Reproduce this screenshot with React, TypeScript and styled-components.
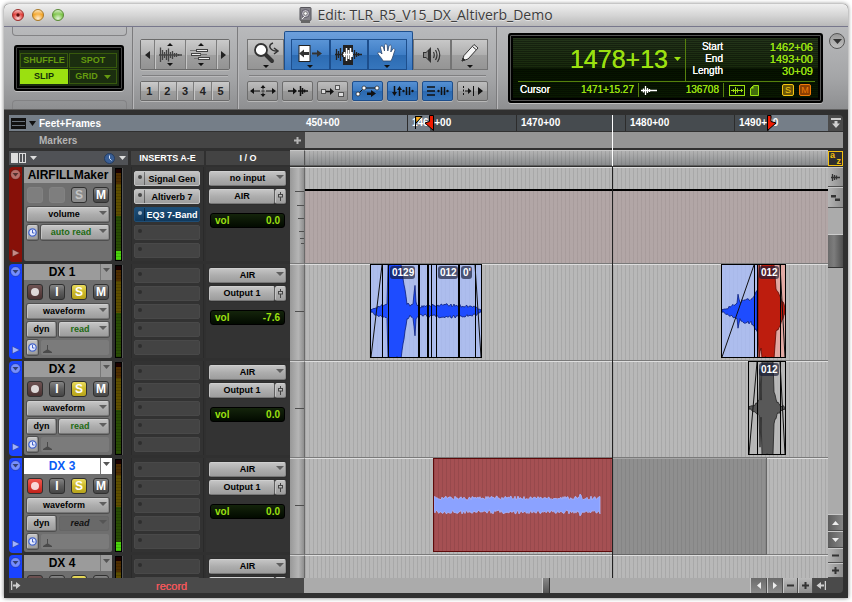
import React from "react";
import styled, { createGlobalStyle, css } from "styled-components";

const GlobalStyle = createGlobalStyle`
  * { box-sizing: border-box; }
  html, body { margin: 0; background: #fff; }
  body, button, select { font-family: "Liberation Sans", Arial, sans-serif; }
  button, select { border: 0; padding: 0; margin: 0; color: inherit; background: none; }
  svg { display: block; }
`;

/* ---------- shared pieces ---------- */

const stripes = css`
  background-image: repeating-linear-gradient(90deg, rgba(0, 0, 0, 0.085) 0 1px, transparent 1px 4px);
`;
const metal = css`
  background: linear-gradient(#c4c4c4, #adadad 50%, #9d9d9d);
`;
const lcdTexture = css`
  background:
    repeating-linear-gradient(rgba(0, 0, 0, 0.35) 0 1px, transparent 1px 2px),
    linear-gradient(#25361c, #182a0c 50%, #061300 51%, #0a1a02);
`;

const Window = styled.main`
  margin: 4px;
  height: calc(100vh - 8px);
  display: flex;
  flex-direction: column;
  overflow: hidden;
  border-radius: 5px 5px 0 0;
  background: #303030;
  box-shadow: 0 0 4px rgba(0, 0, 0, 0.55);
`;

/* ---------- title bar ---------- */

const TitleBar = styled.header`
  height: 22px;
  flex: none;
  display: grid;
  grid-template-columns: 1fr auto 1fr;
  align-items: center;
  background: linear-gradient(#efefef, #d6d6d6 50%, #b9b9b9);
`;
const Lights = styled.div`
  display: flex;
  gap: 8px;
  padding-left: 8px;
`;
const Light = styled.button<{ $tone: string; $edge: string }>`
  width: 12px;
  height: 12px;
  border-radius: 50%;
  border: 1px solid ${(p) => p.$edge};
  display: grid;
  place-items: center;
  color: #5d0f0d;
  background: radial-gradient(circle at 50% 85%, rgba(255, 255, 255, 0.8), transparent 55%),
    linear-gradient(rgba(255, 255, 255, 0.7), transparent 45%), ${(p) => p.$tone};
`;
const Title = styled.h1`
  margin: 0;
  display: flex;
  align-items: center;
  gap: 5px;
  font: 400 14px/22px "Open Sans", "Noto Sans", sans-serif;
  color: #3c3c3c;
  text-shadow: 0 1px 0 rgba(255, 255, 255, 0.5);
`;

/* ---------- toolbar ---------- */

const Toolbar = styled.section`
  height: 84px;
  flex: none;
  display: flex;
  border-top: 1px solid #77778c;
  border-bottom: 1px solid #606060;
  background: linear-gradient(#b9babc, #a5a6a8 60%, #8e8f91);
`;
const Section = styled.div<{ $w: number }>`
  flex: none;
  width: ${(p) => p.$w}px;
  border-right: 1px solid #7b7b7d;
  box-shadow: 1px 0 0 #b8b8ba;
  padding: 12px 7px 0;
`;
const ModeSection = styled(Section)`
  padding: 0 5px 0 8px;
  display: flex;
  flex-direction: column;
  justify-content: space-between;
`;
const Bracket = styled.div<{ $top?: boolean }>`
  height: 9px;
  border: 1px solid #838385;
  ${(p) =>
    p.$top
      ? css`border-top: 0; border-radius: 0 0 4px 4px;`
      : css`border-bottom: 0; border-radius: 4px 4px 0 0;`}
`;
const ModeLcd = styled.div`
  height: 46px;
  margin: 0 3px 0 2px;
  padding: 6px 5px 5px 4px;
  border-radius: 3px;
  border: 2px solid #000;
  box-shadow: inset 0 0 0 1px #444, inset 0 0 0 3px #000, 0 1px 0 #c4c4c4;
  background: #1a2b10;
  display: grid;
  grid-template-columns: 1fr 1fr;
  gap: 1px;
`;
const ModeButton = styled.button<{ $on?: boolean }>`
  display: flex;
  align-items: center;
  justify-content: center;
  gap: 6px;
  font-size: 9px;
  line-height: 13px;
  font-weight: 700;
  border: 1px solid ${(p) => (p.$on ? "#9be010" : "#37580d")};
  color: ${(p) => (p.$on ? "#14300a" : "#659a10")};
  background: ${(p) => (p.$on ? "#9be010" : "#1b2e0f")};
`;
const ButtonStrip = styled.div`
  display: flex;
  height: 31px;
  border: 1px solid #6b6b6b;
  border-radius: 2px;
  box-shadow: 0 1px 0 #b8b8b8;
`;
const NumberStrip = styled(ButtonStrip)`
  height: 20px;
`;
const StripButton = styled.button<{ $w?: number }>`
  ${(p) => (p.$w ? `width: ${p.$w}px;` : "flex: 1;")}
  display: flex;
  align-items: center;
  justify-content: center;
  font-size: 11px;
  font-weight: 700;
  color: #222;
  background: linear-gradient(#cbcbcb, #b0b0b0 50%, #9f9f9f 51%, #939393);
  & + & { border-left: 1px solid #7d7d7d; box-shadow: inset 1px 0 0 #c6c6c6; }
`;
const Rule = styled.div`
  height: 2px;
  margin: 5px 2px 4px;
  border-top: 1px solid #7f7f81;
  border-bottom: 1px solid #b9b9bb;
`;
const ToolSection = styled(Section)`
  padding: 4px 8px 0 9px;
`;
const ToolRow = styled.div`
  display: flex;
  align-items: flex-end;
`;
const Tool = styled.button<{ $on?: boolean; $w: number }>`
  width: ${(p) => p.$w}px;
  height: 31px;
  display: flex;
  align-items: center;
  justify-content: center;
  color: #222;
  border: 1px solid ${(p) => (p.$on ? "#1d4e8c" : "#747474")};
  ${(p) =>
    p.$on
      ? css`background: linear-gradient(#5a94d6, #3f7ec6 50%, #2c6bb2 51%, #3676bd);`
      : css`background: linear-gradient(#c8c8c8, #b0b0b0 50%, #a0a0a0 51%, #959595);`}
`;
const SmartTool = styled.div`
  width: 129px;
  height: 39px;
  display: flex;
  align-items: flex-end;
  justify-content: center;
  border: 1px solid #1d4e8c;
  border-bottom: 0;
  border-radius: 2px 2px 0 0;
  background: linear-gradient(#6c9fdc, #3a78c0);
`;
const OptionRow = styled.div`
  display: flex;
  gap: 4px;
`;
const Option = styled.button<{ $on?: boolean }>`
  width: 31px;
  height: 20px;
  display: flex;
  align-items: center;
  justify-content: center;
  color: #111;
  border-radius: 2px;
  border: 1px solid ${(p) => (p.$on ? "#1d4e8c" : "#6d6d6d")};
  box-shadow: 0 1px 0 #b8b8b8;
  ${(p) =>
    p.$on
      ? css`background: linear-gradient(#5590d3, #3b7bc3 50%, #2b69b0 51%, #3474bb);`
      : css`background: linear-gradient(#bdbdbd, #a8a8a8 50%, #999 51%, #8f8f8f);`}
`;

/* ---------- counter ---------- */

const CounterSection = styled.div`
  flex: 1;
  min-width: 0;
  display: flex;
  align-items: flex-start;
  gap: 6px;
  padding: 6px 3px 0 11px;
`;
const Counter = styled.div`
  flex: 1;
  height: 70px;
  padding: 4px 6px 3px 8px;
  border-radius: 3px;
  border: 2px solid #000;
  box-shadow: inset 0 0 0 1px #555, inset 0 0 0 3px #000, 0 1px 0 #c0c0c0;
  ${lcdTexture}
  display: flex;
  flex-direction: column;
  font-size: 10px;
  line-height: 12px;
  color: #9be010;
`;
const CounterTop = styled.div`
  display: flex;
  height: 43px;
  border-bottom: 1px solid #55800d;
`;
const MainTime = styled.output`
  flex: 1;
  display: flex;
  align-items: center;
  justify-content: flex-end;
  gap: 6px;
  padding: 0 4px 2px 0;
  font-size: 25px;
  text-shadow: 0 0 currentColor;
`;
const SelectionTimes = styled.dl`
  width: 130px;
  margin: 0;
  padding: 2px 2px 0 6px;
  border-left: 1px solid #55800d;
  display: grid;
  grid-template-columns: 31px 1fr;
  grid-auto-rows: 12px;
  text-align: right;
`;
const Term = styled.dt`
  color: #fff;
  text-shadow: 0 0 currentColor;
`;
const Value = styled.dd`
  margin: 0;
  font-size: 11px;
  text-shadow: 0 0 currentColor;
`;
const CounterBottom = styled.div`
  flex: 1;
  display: grid;
  grid-template-columns: 1fr 85px 92px;
  align-items: center;
  text-shadow: 0 0 currentColor;
`;
const CounterCell = styled.div`
  display: flex;
  align-items: center;
  justify-content: space-between;
  height: 14px;
  padding: 0 4px 0 2px;
  & + & { border-left: 1px solid #55800d; }
`;
const CellGroup = styled.div`
  display: flex;
  gap: 5px;
  padding-left: 3px;
`;
const Lamp = styled.button<{ $fg: string; $bg: string }>`
  width: 12px;
  height: 12px;
  border: 1px solid ${(p) => p.$fg};
  border-radius: 2px;
  background: ${(p) => p.$bg};
  color: ${(p) => p.$fg};
  font-size: 9px;
  line-height: 10px;
`;
const White = styled.span`
  color: #fff;
`;
const RoundButton = styled.button`
  width: 16px;
  height: 16px;
  border-radius: 50%;
  border: 1px solid #555;
  background: linear-gradient(#999, #c0c0c0);
  color: #333;
  display: grid;
  place-items: center;
`;

/* ---------- edit area ---------- */

const Body = styled.section`
  flex: 1;
  min-height: 0;
  display: flex;
  flex-direction: column;
  padding: 5px;
  position: relative;
`;
const RulerRow = styled.div`
  flex: none;
  display: flex;
  height: 16px;
  margin-bottom: 1px;
`;
const RulerHead = styled.div<{ $bg: string; $fg: string }>`
  flex: none;
  width: 296px;
  display: flex;
  align-items: center;
  gap: 3px;
  padding: 0 4px 0 2px;
  background: ${(p) => p.$bg};
  color: ${(p) => p.$fg};
  font-size: 10px;
  font-weight: 700;
`;
const RulerLabel = styled.span<{ $indent: number }>`
  flex: 1;
  padding-left: ${(p) => p.$indent}px;
`;
const Ruler = styled.div`
  flex: 1;
  position: relative;
  overflow: hidden;
  background: #757e88;
  color: #fff;
  font-size: 10px;
  font-weight: 700;
  line-height: 15px;
`;
const RulerSelection = styled.div<{ $x: number; $w: number }>`
  position: absolute;
  inset: 0 auto 0 ${(p) => p.$x}px;
  width: ${(p) => p.$w}px;
  background: #464b4f;
`;
const Mark = styled.span<{ $x: number; $first?: boolean }>`
  position: absolute;
  top: 0;
  bottom: 0;
  left: ${(p) => p.$x}px;
  padding-left: ${(p) => (p.$first ? 1 : 4)}px;
  border-left: ${(p) => (p.$first ? "0" : "1px solid #2c2c2c")};
`;
const Pin = styled.div<{ $x: number }>`
  position: absolute;
  top: 0;
  left: ${(p) => p.$x}px;
`;
const MarkerLane = styled.div`
  flex: 1;
  background: #959595;
`;
const CornerButton = styled.button`
  flex: none;
  width: 15px;
  background: #4b4b4b;
  color: #cfcfcf;
  border-radius: 0 4px 0 0;
  display: grid;
  place-items: center;
`;
const Main = styled.div`
  flex: 1;
  min-height: 0;
  display: flex;
  margin-top: 1px;
`;
const TrackArea = styled.div`
  flex: 1;
  min-width: 0;
  overflow: hidden;
  position: relative;
`;
const Grid = styled.div`
  display: grid;
  grid-template-columns: 13px 2px 88px 3px 8px 8px 73px 2px 84px 15px 1fr;
`;
const HeadGrid = styled(Grid)`
  height: 17px;
`;
const Head = styled.div<{ $from: number; $to: number }>`
  grid-column: ${(p) => p.$from} / ${(p) => p.$to};
  height: 14px;
  margin-top: 1px;
  background: #434343;
  color: #fff;
  font-size: 9px;
  font-weight: 700;
  line-height: 15px;
  text-align: center;
`;
const TrackHead = styled(Head)`
  background: #505256;
  display: flex;
  align-items: center;
  justify-content: space-between;
  padding: 0 2px;
  margin-right: 3px;
  color: #ddd;
`;
const HeadGroup = styled.div`
  display: flex;
  align-items: center;
  gap: 4px;
`;
const Overview = styled.div<{ $plain?: boolean }>`
  height: 16px;
  border-top: 1px solid #c6c6c6;
  border-bottom: 1px solid #5e5e5e;
  background: linear-gradient(#b4b4b4, #8a8c8e);
  ${(p) => p.$plain && css`border-right: 1px solid #555;`}
  position: relative;
  &::after {
    content: "";
    position: absolute;
    inset: 0;
    ${(p) => !p.$plain && stripes}
  }
`;
const TrackRow = styled(Grid)`
  height: 97px;
`;
const ColorStrip = styled.div<{ $c: string }>`
  height: 95px;
  border-radius: 4px 0 0 4px;
  background: ${(p) => p.$c};
  display: flex;
  flex-direction: column;
  justify-content: space-between;
  align-items: center;
  padding: 2px 0 5px;
`;
const Panel = styled.div`
  grid-column: 3;
  height: 94px;
  background: #6f6f6f;
  border-radius: 0 0 2px 2px;
  display: flex;
  flex-direction: column;
`;
const NameBar = styled.div<{ $sel?: boolean }>`
  display: flex;
  height: 16px;
  margin-bottom: 4px;
  background: ${(p) => (p.$sel ? "#fff" : "#9b9b9b")};
  color: ${(p) => (p.$sel ? "#0a5cf5" : "#000")};
`;
const NameButton = styled.button`
  flex: 1;
  font-size: 12px;
  line-height: 16px;
  font-weight: 700;
  white-space: nowrap;
`;
const NameMenu = styled.button`
  width: 12px;
  border-left: 1px solid #777;
  color: #555;
  display: flex;
  justify-content: center;
  padding-top: 4px;
`;
const Controls = styled.div`
  padding: 0 3px;
  display: flex;
  flex-direction: column;
  gap: 3px;
`;
const ControlRow = styled.div`
  display: flex;
  gap: 3px;
`;
const KeyRow = styled.div`
  display: flex;
  justify-content: space-between;
  margin-bottom: 1px;
`;
const keyTone = {
  off: "#7e7e7e",
  dark: "linear-gradient(#848484, #5d5d5d 50%, #454545)",
  gray: "#8b8b8b",
  arm: "linear-gradient(#6e5353, #4a3232)",
  armed: "linear-gradient(#f2584d, #c0211a)",
  solo: "linear-gradient(#e9db5e, #cbb92a 50%, #b8a41c)",
};
const Key = styled.button<{ $tone: keyof typeof keyTone }>`
  width: 16px;
  height: 16px;
  border-radius: 3px;
  background: ${(p) => keyTone[p.$tone]};
  border: 1px solid ${(p) => (p.$tone === "off" ? "#828282" : "#303030")};
  color: ${(p) => (p.$tone === "gray" ? "#c4c4c4" : "#fff")};
  font-size: 12px;
  font-weight: 700;
  line-height: 14px;
  display: grid;
  place-items: center;
`;
const field = css`
  height: 15px;
  border: 1px solid #d0d0d0;
  border-color: #cfcfcf #8c8c8c #777 #c4c4c4;
  border-radius: 2px;
  box-shadow: 0 0 0 1px rgba(40, 40, 40, 0.45);
  ${metal}
  color: #000;
  font-size: 9px;
  font-weight: 700;
  line-height: 13px;
`;
const DropWrap = styled.label<{ $dim?: boolean }>`
  flex: 1;
  position: relative;
  display: block;
  &::after {
    content: "";
    position: absolute;
    right: 2px;
    top: 4px;
    border: 4px solid transparent;
    border-top-color: ${(p) => (p.$dim ? "#555" : "#5f5f5f")};
    border-bottom: 0;
    pointer-events: none;
  }
`;
const DropSelect = styled.select<{ $fg?: string; $dim?: boolean }>`
  ${field}
  display: block;
  width: 100%;
  appearance: none;
  padding: 0 8px 0 0;
  text-align: center;
  text-align-last: center;
  color: ${(p) => p.$fg || "#000"};
  ${(p) => p.$dim && css`background: #696969; border-color: #666; font-style: italic; box-shadow: none;`}
`;
const IoSelect = styled(DropSelect)`
  padding: 0 8px;
`;
const SmallButton = styled.button<{ $w: number }>`
  ${field}
  flex: none;
  width: ${(p) => p.$w}px;
  display: grid;
  place-items: center;
`;
const ElasticBox = styled.div`
  flex: 1;
  height: 15px;
  border-radius: 2px;
  background: #7b7b7b;
  padding: 4px 0 0 2px;
`;
const Meter = styled.div`
  grid-column: 5;
  height: 93px;
  margin-top: 1px;
  padding: 1px;
  background: #000;
  border-right: 1px solid #555;
`;
const MeterBar = styled.div<{ $lit?: boolean }>`
  height: 100%;
  background:
    repeating-linear-gradient(rgba(0, 0, 0, 0.15) 0 1px, transparent 1px 3px),
    linear-gradient(#1c0000 4px, #4f2e00 4px 15px, #5e4e00 15px 47px, #294c04 47px ${(p) =>
      p.$lit ? "82px, #4ad40a 82px" : "100%"});
`;
const Inserts = styled.div`
  grid-column: 7;
  height: 94px;
  padding: 4px 3px 0 2px;
  background: #323232;
  border: 1px solid #2a2a2a;
  border-width: 0 1px;
  display: flex;
  flex-direction: column;
  gap: 3px;
`;
const Slot = styled.button<{ $kind: "empty" | "on" | "blue" }>`
  height: 15px;
  flex: none;
  display: flex;
  border-radius: 2px;
  font-size: 9px;
  font-weight: 700;
  line-height: 15px;
  white-space: nowrap;
  ${(p) => p.$kind === "empty" && css`background: #434343; color: #222; border: 1px solid #494949;`}
  ${(p) => p.$kind === "on" && css`${metal} color: #000; border: 1px solid #c4c4c4;`}
  ${(p) => p.$kind === "blue" && css`background: linear-gradient(#1d4f7a, #103a5e); color: #fff; border: 1px solid #1f4d74;`}
`;
const SlotDot = styled.span<{ $ruled: boolean }>`
  width: 10px;
  height: 13px;
  padding: 3px 0 0 3px;
  border-right: ${(p) => (p.$ruled ? "1px solid rgba(0, 0, 0, 0.4)" : "0")};
`;
const SlotName = styled.span`
  flex: 1;
  line-height: 14px;
`;
const Io = styled.div`
  grid-column: 9;
  height: 94px;
  background: #333;
  padding: 4px 4px 0 3px;
  display: flex;
  flex-direction: column;
  gap: 3px;
`;
const IoRow = styled.div`
  display: flex;
`;
const OutputButton = styled.button`
  ${field}
  flex: 1;
`;
const Volume = styled.div`
  height: 15px;
  margin: 6px 1px 0;
  padding: 0 4px;
  border: 1px solid #000;
  border-radius: 3px;
  background: linear-gradient(#14240b, #020a00);
  color: #9be010;
  font-size: 10px;
  line-height: 14px;
  font-weight: 700;
  display: flex;
  justify-content: space-between;
`;
const Gutter = styled.div`
  grid-column: 10;
  border-right: 1px solid #6a6a6a;
  border-top: 1px solid #d2d2d2;
  border-bottom: 1px solid #7a7a7a;
  background: linear-gradient(90deg, #989898, #b5b5b5 60%, #8e8e8e);
  position: relative;
`;
const Tick = styled.i<{ $y: number; $w: number }>`
  position: absolute;
  right: 0;
  top: ${(p) => p.$y}px;
  width: ${(p) => p.$w}px;
  height: 1px;
  background: #4f4f4f;
`;
const Lane = styled.div`
  position: relative;
  overflow: hidden;
  background-color: #b8b8b8;
  ${stripes}
  box-shadow: inset 0 1px 0 #dedede, inset 0 -1px 0 #7a7a7a;
`;
const Automation = styled.div`
  position: absolute;
  inset: 22px 0 1px;
  border-top: 2px solid #000;
  background: rgba(170, 135, 135, 0.36);
`;
const ClipBox = styled.div<{ $x: number; $w: number }>`
  position: absolute;
  top: 0;
  left: ${(p) => p.$x}px;
  width: ${(p) => p.$w}px;
  height: 94px;
`;
const ClipTag = styled.span<{ $x: number }>`
  position: absolute;
  top: 2px;
  left: ${(p) => p.$x}px;
  height: 13px;
  padding: 0 1px 0 2px;
  border-radius: 3px;
  background: rgba(20, 25, 50, 0.65);
  color: #fff;
  font-size: 10px;
  font-weight: 700;
  line-height: 13px;
  white-space: nowrap;
`;
const LaneSelection = styled.div<{ $x: number; $w: number }>`
  position: absolute;
  top: 0;
  bottom: 0;
  left: ${(p) => p.$x}px;
  width: ${(p) => p.$w}px;
  background: rgba(75, 75, 75, 0.38);
  border-right: 1px solid #666;
`;
const RecordClip = styled.div<{ $x: number; $w: number }>`
  position: absolute;
  top: 0;
  height: 94px;
  left: ${(p) => p.$x}px;
  width: ${(p) => p.$w}px;
  background-color: #a55053;
  ${stripes}
  border: 1px solid #5e0a0a;
  border-right: 0;
`;
const Playhead = styled.div`
  position: absolute;
  top: 17px;
  bottom: 0;
  left: 603px;
  width: 1px;
  background: #222;
`;
const RulerPlayhead = styled.div`
  position: absolute;
  top: 5px;
  left: 608px;
  width: 1px;
  height: 51px;
  background: #fff;
`;

/* ---------- scrollbars ---------- */

const Side = styled.aside`
  flex: none;
  width: 15px;
  display: flex;
  flex-direction: column;
`;
const AzButton = styled.button`
  flex: none;
  height: 15px;
  margin: 1px 0;
  border: 1px solid #f3c010;
  background: #2e2e2e;
  color: #f3c010;
  font-size: 9px;
  line-height: 6px;
  font-weight: 700;
  display: grid;
  grid-template-rows: 6px 7px;
  padding: 0 1px;
`;
const Letter = styled.span<{ $end?: boolean }>`
  text-align: ${(p) => (p.$end ? "right" : "left")};
`;
const SideButton = styled.button<{ $h: number; $dark?: boolean }>`
  flex: none;
  height: ${(p) => p.$h}px;
  border-top: 1px solid #c8c8c8;
  border-bottom: 1px solid #505050;
  background: ${(p) =>
    p.$dark ? "linear-gradient(90deg, #5d5d5d, #858585)" : "linear-gradient(90deg, #b4b4b4, #8d8d8d)"};
  color: ${(p) => (p.$dark ? "#eee" : "#333")};
  display: grid;
  place-items: center;
`;
const SideTrack = styled.div`
  flex: 1;
  background: #ababab;
  padding-top: 26px;
`;
const SideThumb = styled.div`
  height: 34px;
  border-top: 1px solid #ccc;
  border-bottom: 1px solid #333;
  background: linear-gradient(90deg, #6b6b6b, #7d7d7d 40%, #4f4f4f);
`;
const BottomBar = styled.footer`
  flex: none;
  height: 15px;
  display: flex;
`;
const Status = styled.div`
  flex: none;
  width: 295px;
  display: flex;
  align-items: center;
  background: #4a4a4a;
  color: #f0575b;
  font-size: 11px;
  line-height: 14px;
  padding-left: 2px;
  text-shadow: 0 0 currentColor;
`;
const StatusText = styled.span`
  padding-left: 135px;
`;
const HTrack = styled.div`
  flex: 1;
  background: #ababab;
  padding-left: 238px;
`;
const HThumb = styled.div`
  width: 8px;
  height: 15px;
  border-left: 1px solid #ccc;
  border-right: 1px solid #333;
  background: linear-gradient(#888, #555);
`;
const HButton = styled.button<{ $w: number; $dark?: boolean }>`
  flex: none;
  width: ${(p) => p.$w}px;
  border-left: 1px solid #c8c8c8;
  border-right: 1px solid #505050;
  background: ${(p) => (p.$dark ? "linear-gradient(#6b6b6b, #8b8b8b)" : "linear-gradient(#bbb, #8e8e8e)")};
  color: ${(p) => (p.$dark ? "#eee" : "#333")};
  display: grid;
  place-items: center;
`;
const Corner = styled.button`
  width: 30px;
  background: #4a4a4a;
  color: #cfcfcf;
  padding-left: 3px;
  border-radius: 0 0 4px 0;
`;

/* ---------- icons ---------- */

const Svg = ({ w, h, children }: { w: number; h: number; children: React.ReactNode }) => (
  <svg width={w} height={h} viewBox={`0 0 ${w} ${h}`} fill="currentColor" aria-hidden="true">
    {children}
  </svg>
);
const Down = ({ w = 7, h = 4 }) => <Svg w={w} h={h}><path d={`M0 0H${w}L${w / 2} ${h}Z`} /></Svg>;
const Up = () => <Svg w={7} h={4}><path d="M0 4H7L3.5 0Z" /></Svg>;
const Left = ({ w = 5, h = 8 }) => <Svg w={w} h={h}><path d={`M${w} 0V${h}L0 ${h / 2}Z`} /></Svg>;
const Right = ({ w = 5, h = 8 }) => <Svg w={w} h={h}><path d={`M0 0V${h}L${w} ${h / 2}Z`} /></Svg>;
const Minus = () => <Svg w={7} h={7}><path d="M0 2.5H7V4.5H0Z" /></Svg>;
const Plus = () => <Svg w={7} h={7}><path d="M0 2.5H2.5V0H4.5V2.5H7V4.5H4.5V7H2.5V4.5H0Z" /></Svg>;

const TitleIcon = () => (
  <Svg w={13} h={16}>
    <rect x="1" y="0.5" width="11" height="13" rx="1" fill="#85838a" stroke="#55545a" />
    <circle cx="6.5" cy="6.5" r="4" fill="#b9b5c1" stroke="#5a5865" />
    <circle cx="6.5" cy="6.5" r="1.8" fill="#fff" stroke="#777" />
    <path d="M2 13H11V16H2Z" fill="#666" />
    <path d="M3 12L6 9" stroke="#eee" />
  </Svg>
);
const WaveZoom = () => (
  <Svg w={24} h={26}>
    <path d="M9 4L12 1L15 4ZM9 21L12 24L15 21Z" fill="#111" />
    <path d="M2.500 5.500V20M4.500 8V18M6.500 10V16M8.500 8V18M10.500 6.500V19.500M12.500 10V16M14.500 9V17M16.500 11V15M18.500 11V15M20.500 12V14M1 13H24" stroke="#444" strokeWidth="1.3" />
  </Svg>
);
const MidiZoom = () => (
  <Svg w={22} h={26}>
    <path d="M8 4L11 1L14 4ZM8 21L11 24L14 21Z" fill="#111" />
    <g fill="#eee" stroke="#444"><rect x="6.5" y="7.5" width="11" height="2" /><rect x="1.5" y="11.5" width="9" height="2" /><rect x="8.5" y="15.5" width="11" height="2" /></g>
    <path d="M0 8.5H6M10 12.5H17M4 16.5H8" stroke="#777" />
  </Svg>
);
const Zoomer = () => (
  <Svg w={28} h={28}>
    <path d="M13 13L20 20" stroke="#333" strokeWidth="4" strokeLinecap="round" />
    <circle cx="9" cy="9" r="6" fill="#fff" stroke="#333" strokeWidth="1.8" />
    <path d="M21 2C15 4 18 10 25 10M22 7L26 10L22 13" fill="none" stroke="#333" strokeWidth="1.5" />
    <path d="M11 24H17L14 27Z" fill="#111" />
  </Svg>
);
const Trim = () => (
  <Svg w={26} h={28}>
    <rect x="2" y="4.5" width="11" height="16" fill="#fff" stroke="#222" />
    <path d="M2 12.5L7 8.5V11H12V14H7V16.5ZM15 11.5H20V9L25 12.5L20 16V13.5H15Z" fill="#333" />
    <path d="M10 24H16L13 27Z" fill="#111" />
  </Svg>
);
const Selector = () => (
  <Svg w={28} h={28}>
    <rect x="8" y="4" width="10" height="20" fill="#222" />
    <path d="M1.5 8V19M3.5 10V17M5.5 7V20M7.5 11V16M19.5 9V18M21.5 11V16M23.5 12V15M0 13.5H27" stroke="#222" strokeWidth="1.3" />
    <path d="M9.5 11V16M11.5 7V20M13.5 9V18M15.5 7V19M17 11V16M8 13.5H18" stroke="#fff" strokeWidth="1.5" />
  </Svg>
);
const Grabber = () => (
  <Svg w={22} h={28}>
    <path d="M7 20C6 17 3 15 1.500 12C2 10.500 4.500 11 6 13L4.500 6.500C4.500 4.500 6.800 4.500 7.300 6L8.500 10V4.500C8.500 2.500 11 2.500 11.200 4.500L11.800 10L13 5C13.500 3.500 15.500 3.800 15.300 5.500L14.800 11L16.800 8C17.800 7 19.300 8 18.800 9.500C17.500 13 17 16 15 20Z" fill="#fff" stroke="#29466e" strokeWidth="0.8" />
    <path d="M8 24H14L11 27Z" fill="#111" />
  </Svg>
);
const Scrub = () => (
  <Svg w={20} h={22}>
    <path d="M1 8H4L9 3V19L4 14H1Z" fill="#333" />
    <path d="M2 9H4L6 7V15L4 13H2Z" fill="#888" />
    <path d="M11.500 8Q13 11 11.500 14M13.500 6Q16.500 11 13.500 16M15.500 4Q20 11 15.500 18" fill="none" stroke="#333" strokeWidth="1.2" />
  </Svg>
);
const Pencil = () => (
  <Svg w={22} h={28}>
    <path d="M3 20L5 14.500L15 3.500L19 7L9 18Z" fill="#f4f4f4" stroke="#333" />
    <path d="M3 20L4 17L6 19ZM13.500 5.500L17 8.500" fill="#222" stroke="#333" />
    <path d="M8 24H14L11 27Z" fill="#111" />
  </Svg>
);
const OptTransient = () => (
  <Svg w={26} h={14}>
    <path d="M0 7L4 4V10ZM26 7L22 4V10ZM10.500 4L13 1L15.500 4ZM10.500 10L13 13L15.500 10Z" />
    <path d="M3 7H10M16 7H23M13 4V5.500M13 8.500V10M11.500 7H14.500" stroke="currentColor" fill="none" />
  </Svg>
);
const OptTab = () => (
  <Svg w={22} h={14}>
    <path d="M6 3.500L10 7L6 10.500Z" /><path d="M1 7H7M11 7H21M13.500 2V12M15.500 4V10M17.500 5.500V8.500" stroke="currentColor" strokeWidth="1.5" />
  </Svg>
);
const OptMirror = () => (
  <Svg w={24} h={14}>
    <path d="M9 4L13 7.500L9 11Z" /><path d="M5 7.500H10" stroke="currentColor" strokeWidth="1.500" />
    <g fill="#ddd" stroke="#555"><rect x="0.500" y="5.500" width="4" height="4" /><rect x="14.500" y="1.500" width="4" height="4" /><rect x="17.500" y="8.500" width="5" height="4" /></g>
  </Svg>
);
const OptAutomation = () => (
  <Svg w={26} h={16}>
    <path d="M3 11L9 5H22" fill="none" stroke="#111" />
    <g fill="#fff" stroke="#222" strokeWidth="0.7"><circle cx="3" cy="11" r="2" /><circle cx="9" cy="5" r="2" /><circle cx="22" cy="5" r="2" /></g>
    <path d="M12 9.500H16V7L21 10.500L16 14V12H12Z" />
  </Svg>
);
const OptArrows = () => (
  <Svg w={24} h={14}>
    <path d="M1 8H6L3.500 12ZM6 6H11L8.500 2Z" />
    <path d="M3.500 2V9M8.500 5V12M15.500 3V11M18.500 3V11" stroke="currentColor" strokeWidth="1.500" />
    <circle cx="12.500" cy="7" r="1.200" /><circle cx="21.500" cy="7" r="1.200" />
  </Svg>
);
const OptLines = () => (
  <Svg w={24} h={14}>
    <path d="M1 3H9M1 7H9M1 11H9M15.500 3V11M18.500 3V11" stroke="currentColor" strokeWidth="1.500" />
    <circle cx="12.500" cy="7" r="1.200" /><circle cx="21.500" cy="7" r="1.200" />
  </Svg>
);
const OptInsertion = () => (
  <Svg w={22} h={14}>
    <path d="M6 4L9.500 7L6 10ZM16 3L21 7L16 11Z" /><path d="M3 7H7M11.500 2V12" stroke="currentColor" />
    <path d="M1.500 2V12" stroke="currentColor" strokeDasharray="2 1.500" />
  </Svg>
);
const Clock = ({ fg = "#e6ebff", bg = "#4363c8" }) => (
  <Svg w={9} h={9}>
    <circle cx="4.500" cy="4.500" r="3.700" fill={fg} stroke={bg} strokeWidth="1.300" />
    <path d="M4.500 2V5H6.500" fill="none" stroke={bg} />
  </Svg>
);
const HeadClock = () => (
  <Svg w={11} h={11}>
    <circle cx="5.500" cy="5.500" r="5" fill="#3a5f96" stroke="#263c5e" />
    <path d="M5.500 2.500V5.500L7.500 7.500" fill="none" stroke="#d7e4f7" />
  </Svg>
);
const StripMenu = () => (
  <Svg w={11} h={11}>
    <circle cx="5.500" cy="5.500" r="4.800" fill="#fff" fillOpacity="0.4" stroke="#000" strokeOpacity="0.25" />
    <path d="M2.500 4H8.500L5.500 7.500Z" fill="#000" fillOpacity="0.55" />
  </Svg>
);
const CloseDot = () => <Svg w={4} h={4}><circle cx="2" cy="2" r="1.700" /></Svg>;
const RecDot = () => <Svg w={10} h={10}><circle cx="5" cy="5" r="4" fill="#fff" fillOpacity="0.8" /></Svg>;
const Dot = () => <Svg w={4} h={4}><circle cx="2" cy="2" r="2" fillOpacity="0.6" /></Svg>;
const Fader = () => (
  <Svg w={5} h={9}><path d="M2.500 0V9" stroke="#444" /><rect x="0.500" y="2.500" width="4" height="2.500" fill="#bbb" stroke="#444" /></Svg>
);
const Metronome = () => <Svg w={9} h={9}><path d="M0 9V8L4 5.500V1H5V5.500L9 8V9Z" fill="#4a4a4a" /></Svg>;
const WaveGlyph = ({ w }: { w: number }) => (
  <Svg w={w} h={11}>
    <path d={`M0 5.500H${w}M2.500 3.500V7.500M4.500 1V10M6.500 3V8M8.500 4V7`} stroke="currentColor" strokeWidth="1.300" />
  </Svg>
);
const SessionIcon = () => (
  <Svg w={16} h={11}>
    <rect x="0.500" y="0.500" width="15" height="10" fill="none" stroke="currentColor" />
    <path d="M2 5.500H14M4.500 4V7M6.500 2V9M8.500 3.500V7.500M12.500 4V7" stroke="currentColor" />
  </Svg>
);
const PageIcon = () => <Svg w={9} h={11}><path d="M3.500 0.500H8.500V10.500H0.500V3.500Z" fill="#426c0c" stroke="currentColor" /><path d="M0.500 3.500H3.500V0.500" fill="#9be010" /></Svg>;

/* ---------- waveforms ---------- */

type Point = [number, number];

const jitter = (n: number) => {
  const v = Math.sin(n * 127.1) * 43758.5453;
  return v - Math.floor(v);
};

const envelope = (keys: Point[], x: number) => {
  for (let i = 1; i < keys.length; i++) {
    const [x0, h0] = keys[i - 1];
    const [x1, h1] = keys[i];
    if (x <= x1) return h0 + ((h1 - h0) * (x - x0)) / (x1 - x0);
  }
  return keys[keys.length - 1][1];
};

const wavePath = (keys: Point[], mid: number, rough: number) => {
  const from = keys[0][0];
  const to = keys[keys.length - 1][0];
  const top: string[] = [];
  const bottom: string[] = [];
  for (let x = from; x <= to; x++) {
    const h = envelope(keys, x);
    const r = Math.min(rough, h);
    top.push(`${x} ${(mid - h - r * (jitter(x + 3) - 0.5)).toFixed(1)}`);
    bottom.unshift(`${x} ${(mid + h + r * (jitter(x * 2 + 31) - 0.5)).toFixed(1)}`);
  }
  return `M${top.concat(bottom).join("L")}Z`;
};

type Region = { x: number; w: number; fill: string };
type Wave = { keys: Point[]; fill: string; line: string };
type ClipData = {
  x: number;
  w: number;
  regions: Region[];
  waves: Wave[];
  cuts: Point[];
  fades: string;
  tags: { x: number; text: string }[];
};

const Clip = ({ data }: { data: ClipData }) => (
  <ClipBox $x={data.x} $w={data.w}>
    <svg width={data.w} height={94} viewBox={`0 0 ${data.w} 94`} aria-hidden="true">
      {data.regions.map((r) => <rect key={r.x} x={r.x} y={0} width={r.w} height={94} fill={r.fill} fillOpacity={0.75} />)}
      {data.waves.map((w) => <path key={w.fill} d={wavePath(w.keys, 47, 3)} fill={w.fill} stroke={w.line} strokeWidth={0.8} />)}
      {data.cuts.map(([x, w]) => <rect key={x} x={x} y={0} width={w} height={94} fill="#000" />)}
      <path d={data.fades} stroke="#111" fill="none" />
      <rect x={0.5} y={0.5} width={data.w - 1} height={93} fill="none" stroke="#000" />
    </svg>
    {data.tags.map((t) => <ClipTag key={t.x} $x={t.x}>{t.text}</ClipTag>)}
  </ClipBox>
);

const dialogClip: ClipData = {
  x: 65, w: 112,
  regions: [{ x: 0, w: 112, fill: "#a9bfff" }],
  waves: [{
    keys: [[1, 1], [6, 4], [12, 5], [17, 6], [18, 47], [31, 47], [33, 34], [37, 8], [40, 5], [43, 7], [45, 26], [46, 8], [49, 4], [60, 5], [75, 6], [95, 5], [105, 4], [111, 1]],
    fill: "#1e4cff", line: "#0b1f7c",
  }],
  cuts: [[12, 1], [18, 1], [48, 2], [57, 2], [61, 1], [66, 1], [88, 2], [105, 1]],
  fades: "M1 93L12 1M105 1L111 93",
  tags: [{ x: 20, text: "0129" }, { x: 68, text: "012" }, { x: 91, text: "0'" }],
};
const dialogTail: ClipData = {
  x: 416, w: 65,
  regions: [{ x: 0, w: 37, fill: "#a9bfff" }, { x: 37, w: 28, fill: "#f0a69e" }],
  waves: [
    { keys: [[1, 1], [8, 4], [14, 6], [16, 7], [17, 16], [19, 9], [25, 12], [30, 11], [34, 18], [36, 20]], fill: "#1e4cff", line: "#0b1f7c" },
    { keys: [[37, 18], [38, 47], [39, 40], [40, 38], [41, 47], [53, 47], [55, 22], [59, 14], [62, 8], [64, 3]], fill: "#bd1d0e", line: "#5e0a05" },
  ],
  cuts: [[33, 1], [36, 1], [59, 1]],
  fades: "M1 93L33 1M59 1L64 93",
  tags: [{ x: 38, text: "012" }],
};
const mutedTail: ClipData = {
  x: 443, w: 38,
  regions: [{ x: 0, w: 38, fill: "#b8b8b8" }],
  waves: [{ keys: [[1, 1], [5, 3], [9, 5], [11, 8], [12, 38], [13, 8], [14, 47], [25, 47], [26, 16], [29, 6], [33, 3], [37, 1]], fill: "#585858", line: "#222" }],
  cuts: [[9, 1], [32, 1]],
  fades: "M1 93L9 1M32 1L37 93",
  tags: [{ x: 11, text: "012" }],
};

/* ---------- tracks ---------- */

type TrackData = {
  name: string;
  aux?: boolean;
  selected?: boolean;
  armed?: boolean;
  lit?: boolean;
  view: string;
  mode: string;
  inserts: string[];
  input: string;
  output: string;
  vol: string;
  lane: React.ReactNode;
};

const Drop = ({ label, value, fg, dim, io }: { label: string; value: string; fg?: string; dim?: boolean; io?: boolean }) => {
  const Box = io ? IoSelect : DropSelect;
  return (
    <DropWrap $dim={dim}>
      <Box aria-label={label} defaultValue={value} $fg={fg} $dim={dim}>
        <option>{value}</option>
      </Box>
    </DropWrap>
  );
};

const Track = ({ t }: { t: TrackData }) => (
  <TrackRow>
    <ColorStrip $c={t.aux ? "#871008" : "#1a43ff"}>
      <StripMenu />
      <Svg w={8} h={8}><path d="M0.500 0.500L7.500 4L0.500 7.500Z" fill={t.aux ? "#c68a86" : "#9fb1ff"} stroke="#333" strokeOpacity="0.3" /></Svg>
    </ColorStrip>
    <Panel>
      <NameBar $sel={t.selected}>
        <NameButton>{t.name}</NameButton>
        {!t.aux && <NameMenu aria-label={`${t.name} playlists`}><Down /></NameMenu>}
      </NameBar>
      <Controls>
        <KeyRow>
          {t.aux ? <Key $tone="off" aria-label="Record" disabled /> : <Key $tone={t.armed ? "armed" : "arm"} aria-label="Record"><RecDot /></Key>}
          {t.aux ? <Key $tone="off" aria-label="Input" disabled /> : <Key $tone="dark">I</Key>}
          <Key $tone={t.aux ? "gray" : "solo"}>S</Key>
          <Key $tone="dark">M</Key>
        </KeyRow>
        <ControlRow><Drop label="Track view" value={t.view} /></ControlRow>
        <ControlRow>
          {t.aux ? <SmallButton $w={11} aria-label="Timebase"><Clock /></SmallButton> : <SmallButton $w={29}>dyn</SmallButton>}
          <Drop label="Automation mode" value={t.mode} fg={t.armed ? "#111" : "#1d6a12"} dim={t.armed} />
        </ControlRow>
        {!t.aux && (
          <ControlRow>
            <SmallButton $w={11} aria-label="Timebase"><Clock /></SmallButton>
            <ElasticBox><Metronome /></ElasticBox>
          </ControlRow>
        )}
      </Controls>
    </Panel>
    <Meter><MeterBar $lit={t.lit} /></Meter>
    <Inserts>
      {[0, 1, 2, 3, 4].map((i) => {
        const name = t.inserts[i];
        const kind = !name ? "empty" : i === 2 ? "blue" : "on";
        return (
          <Slot key={i} $kind={kind} aria-label={name || `Insert ${i + 1}`}>
            <SlotDot $ruled={!!name}><Dot /></SlotDot>
            <SlotName>{name}</SlotName>
          </Slot>
        );
      })}
    </Inserts>
    <Io>
      <IoRow><Drop io label="Input" value={t.input} /></IoRow>
      <IoRow>
        <OutputButton>{t.output}</OutputButton>
        <SmallButton $w={11} aria-label="Output window"><Fader /></SmallButton>
      </IoRow>
      <Volume><span>vol</span><span>{t.vol}</span></Volume>
    </Io>
    <Gutter>
      {t.aux
        ? [[23, 9], [37, 7], [50, 6], [63, 5], [70, 4], [75, 3]].map(([y, w]) => <Tick key={y} $y={y} $w={w} />)
        : <Tick $y={46} $w={9} />}
    </Gutter>
    <Lane>{t.lane}</Lane>
  </TrackRow>
);

const audio = { view: "waveform", mode: "read", inserts: [], input: "AIR", output: "Output 1", vol: "0.0" };

const recordKeys: Point[] = [[0, 7], [30, 7], [60, 7], [100, 7], [140, 7], [144, 7], [146, 9], [148, 7], [166, 7]];

const tracks: TrackData[] = [
  { name: "AIRFILLMaker", aux: true, lit: true, view: "volume", mode: "auto read", inserts: ["Signal Gen", "Altiverb 7", "EQ3 7-Band"], input: "no input", output: "AIR", vol: "0.0", lane: <Automation /> },
  { ...audio, name: "DX 1", vol: "-7.6", lane: <><Clip data={dialogClip} /><Clip data={dialogTail} /></> },
  { ...audio, name: "DX 2", lane: <Clip data={mutedTail} /> },
  {
    ...audio, name: "DX 3", selected: true, armed: true, lit: true,
    lane: (
      <>
        <LaneSelection $x={307} $w={155} />
        <RecordClip $x={128} $w={179}>
          <svg width={170} height={92} viewBox="0 0 170 92" aria-hidden="true">
            <path d={wavePath(recordKeys, 46, 4)} fill="#8ba2ff" stroke="#a9b8ff" strokeWidth={0.8} />
          </svg>
        </RecordClip>
      </>
    ),
  },
  { ...audio, name: "DX 4", lane: null },
];

const marks = [
  { x: 0, text: "450+00" },
  { x: 102, text: "1460+00" },
  { x: 211, text: "1470+00" },
  { x: 320, text: "1480+00" },
  { x: 429, text: "1490+00" },
];

export default function App() {
  return (
    <>
      <GlobalStyle />
      <Window>
        <TitleBar>
          <Lights>
            <Light $tone="#e2403c" $edge="#9b3230" aria-label="Close"><CloseDot /></Light>
            <Light $tone="#f4a62a" $edge="#a87a2c" aria-label="Minimize" />
            <Light $tone="#7cc447" $edge="#5b8a3a" aria-label="Zoom" />
          </Lights>
          <Title><TitleIcon />Edit: TLR_R5_V15_DX_Altiverb_Demo</Title>
        </TitleBar>

        <Toolbar>
          <ModeSection $w={129}>
            <Bracket $top />
            <ModeLcd>
              <ModeButton>SHUFFLE</ModeButton>
              <ModeButton>SPOT</ModeButton>
              <ModeButton $on>SLIP</ModeButton>
              <ModeButton>GRID<Down /></ModeButton>
            </ModeLcd>
            <Bracket />
          </ModeSection>
          <Section $w={105}>
            <ButtonStrip>
              <StripButton $w={13} aria-label="Zoom out"><Left /></StripButton>
              <StripButton aria-label="Audio zoom"><WaveZoom /></StripButton>
              <StripButton aria-label="MIDI zoom"><MidiZoom /></StripButton>
              <StripButton $w={13} aria-label="Zoom in"><Right /></StripButton>
            </ButtonStrip>
            <Rule />
            <NumberStrip>
              {[1, 2, 3, 4, 5].map((n) => <StripButton key={n}>{n}</StripButton>)}
            </NumberStrip>
          </Section>
          <ToolSection $w={259}>
            <ToolRow>
              <Tool $w={37} aria-label="Zoomer"><Zoomer /></Tool>
              <SmartTool>
                <Tool $on $w={39} aria-label="Trim"><Trim /></Tool>
                <Tool $on $w={38} aria-label="Selector"><Selector /></Tool>
                <Tool $on $w={39} aria-label="Grabber"><Grabber /></Tool>
              </SmartTool>
              <Tool $w={38} aria-label="Scrubber"><Scrub /></Tool>
              <Tool $w={37} aria-label="Pencil"><Pencil /></Tool>
            </ToolRow>
            <Rule />
            <OptionRow>
              <Option aria-label="Zoom toggle"><OptTransient /></Option>
              <Option aria-label="Tab to transients"><OptTab /></Option>
              <Option aria-label="Mirrored MIDI"><OptMirror /></Option>
              <Option $on aria-label="Automation follows edit"><OptAutomation /></Option>
              <Option $on aria-label="Link timeline"><OptArrows /></Option>
              <Option $on aria-label="Link track"><OptLines /></Option>
              <Option aria-label="Insertion follows playback"><OptInsertion /></Option>
            </OptionRow>
          </ToolSection>
          <CounterSection>
            <Counter>
              <CounterTop>
                <MainTime>1478+13<Down /></MainTime>
                <SelectionTimes>
                  <Term>Start</Term><Value>1462+06</Value>
                  <Term>End</Term><Value>1493+00</Value>
                  <Term>Length</Term><Value>30+09</Value>
                </SelectionTimes>
              </CounterTop>
              <CounterBottom>
                <CounterCell><White>Cursor</White><span>1471+15.27</span></CounterCell>
                <CounterCell><White><WaveGlyph w={16} /></White><span>136708</span></CounterCell>
                <CounterCell>
                  <CellGroup><SessionIcon /><PageIcon /></CellGroup>
                  <CellGroup>
                    <Lamp $fg="#f5c511" $bg="#6b5606">S</Lamp>
                    <Lamp $fg="#f07c08" $bg="#8c3f02">M</Lamp>
                  </CellGroup>
                </CounterCell>
              </CounterBottom>
            </Counter>
            <RoundButton aria-label="Toolbar menu"><Down w={9} h={5} /></RoundButton>
          </CounterSection>
        </Toolbar>

        <Body>
          <RulerRow>
            <RulerHead $bg="#757e88" $fg="#fff">
              <Svg w={15} h={11}><path d="M0 0H15V11H0Z" fill="#111" /><path d="M1 3.500H14M1 7.500H14" stroke="#69717a" /></Svg>
              <Svg w={7} h={5}><path d="M0 0H7L3.500 5Z" fill="#111" /></Svg>
              <RulerLabel $indent={0}>Feet+Frames</RulerLabel>
            </RulerHead>
            <Ruler>
              <RulerSelection $x={125} $w={339} />
              {marks.map((m) => <Mark key={m.x} $x={m.x} $first={m.x === 0}>{m.text}</Mark>)}
              <Pin $x={110}><Svg w={8} h={14}><path d="M0.500 1.500H7L1 8Z" fill="#ffb020" stroke="#000" /><path d="M0.500 1V14" stroke="#000" /></Svg></Pin>
              <Pin $x={119}><Svg w={11} h={16}><path d="M5.500 0.500H9.500V15.500L1 8L5.500 6.500Z" fill="#f01a00" stroke="#000" /></Svg></Pin>
              <Pin $x={461}><Svg w={11} h={16}><path d="M1.500 0.500H5V6.500L10 8L1.500 15.500Z" fill="#f01a00" stroke="#000" /></Svg></Pin>
            </Ruler>
            <CornerButton aria-label="Ruler options">
              <Svg w={10} h={10}><path d="M0 0H10V2H0ZM3.500 3H6.500V5.500H9L5 10L1 5.500H3.500Z" /></Svg>
            </CornerButton>
          </RulerRow>
          <RulerRow>
            <RulerHead $bg="#454545" $fg="#b4b4b4">
              <RulerLabel $indent={28}>Markers</RulerLabel>
              <Plus />
            </RulerHead>
            <MarkerLane />
          </RulerRow>

          <Main>
            <TrackArea>
              <HeadGrid>
                <TrackHead $from={1} $to={7}>
                  <HeadGroup>
                    <Svg w={15} h={10}><path d="M0 0H7V10H0ZM8 0H9V10H8ZM11 0H12V10H11ZM14 0H15V10H14ZM9 0H14V1H9ZM9 9H14V10H9Z" /></Svg>
                    <Down />
                  </HeadGroup>
                  <HeadGroup>
                    <HeadClock />
                    <Down />
                  </HeadGroup>
                </TrackHead>
                <Head $from={7} $to={8}>INSERTS A-E</Head>
                <Head $from={9} $to={10}>I / O</Head>
                <Overview $plain />
                <Overview />
              </HeadGrid>
              {tracks.map((t) => <Track key={t.name} t={t} />)}
              <Playhead />
            </TrackArea>
            <Side>
              <AzButton aria-label="Keyboard focus"><Letter>a</Letter><Letter $end>z</Letter></AzButton>
              <SideButton $h={20} aria-label="Waveform zoom"><Svg w={9} h={9}><path d="M0 4.500H9M1.500 1V8M3.500 2V7M5.500 2.500V6.500" stroke="currentColor" strokeWidth="1.300" /></Svg></SideButton>
              <SideButton $h={21} aria-label="Note zoom"><Svg w={9} h={6}><path d="M0 0H5V2.500H0ZM4 3.500H9V6H4Z" /></Svg></SideButton>
              <SideTrack><SideThumb /></SideTrack>
              <SideButton $h={17} $dark aria-label="Scroll up"><Up /></SideButton>
              <SideButton $h={17} $dark aria-label="Scroll down"><Down /></SideButton>
              <SideButton $h={15} aria-label="Shorter tracks"><Minus /></SideButton>
              <SideButton $h={15} aria-label="Taller tracks"><Plus /></SideButton>
            </Side>
          </Main>

          <BottomBar>
            <Status>
              <Svg w={10} h={9}><path d="M0.500 0V9" stroke="#ccc" strokeWidth="1.500" /><path d="M2 3.500H5V1L9.500 4.500L5 8V5.500H2Z" fill="#ccc" /></Svg>
              <StatusText>record</StatusText>
            </Status>
            <HTrack><HThumb /></HTrack>
            <HButton $w={17} $dark aria-label="Scroll left"><Left w={4} h={7} /></HButton>
            <HButton $w={16} $dark aria-label="Scroll right"><Right w={4} h={7} /></HButton>
            <HButton $w={15} aria-label="Zoom out"><Minus /></HButton>
            <HButton $w={15} aria-label="Zoom in"><Plus /></HButton>
            <Corner aria-label="Clip list">
              <Svg w={10} h={9}><path d="M9.500 0V9" stroke="currentColor" strokeWidth="1.500" /><path d="M8 3.500H5V1L0.500 4.500L5 8V5.500H8Z" /></Svg>
            </Corner>
          </BottomBar>
          <RulerPlayhead />
        </Body>
      </Window>
    </>
  );
}
